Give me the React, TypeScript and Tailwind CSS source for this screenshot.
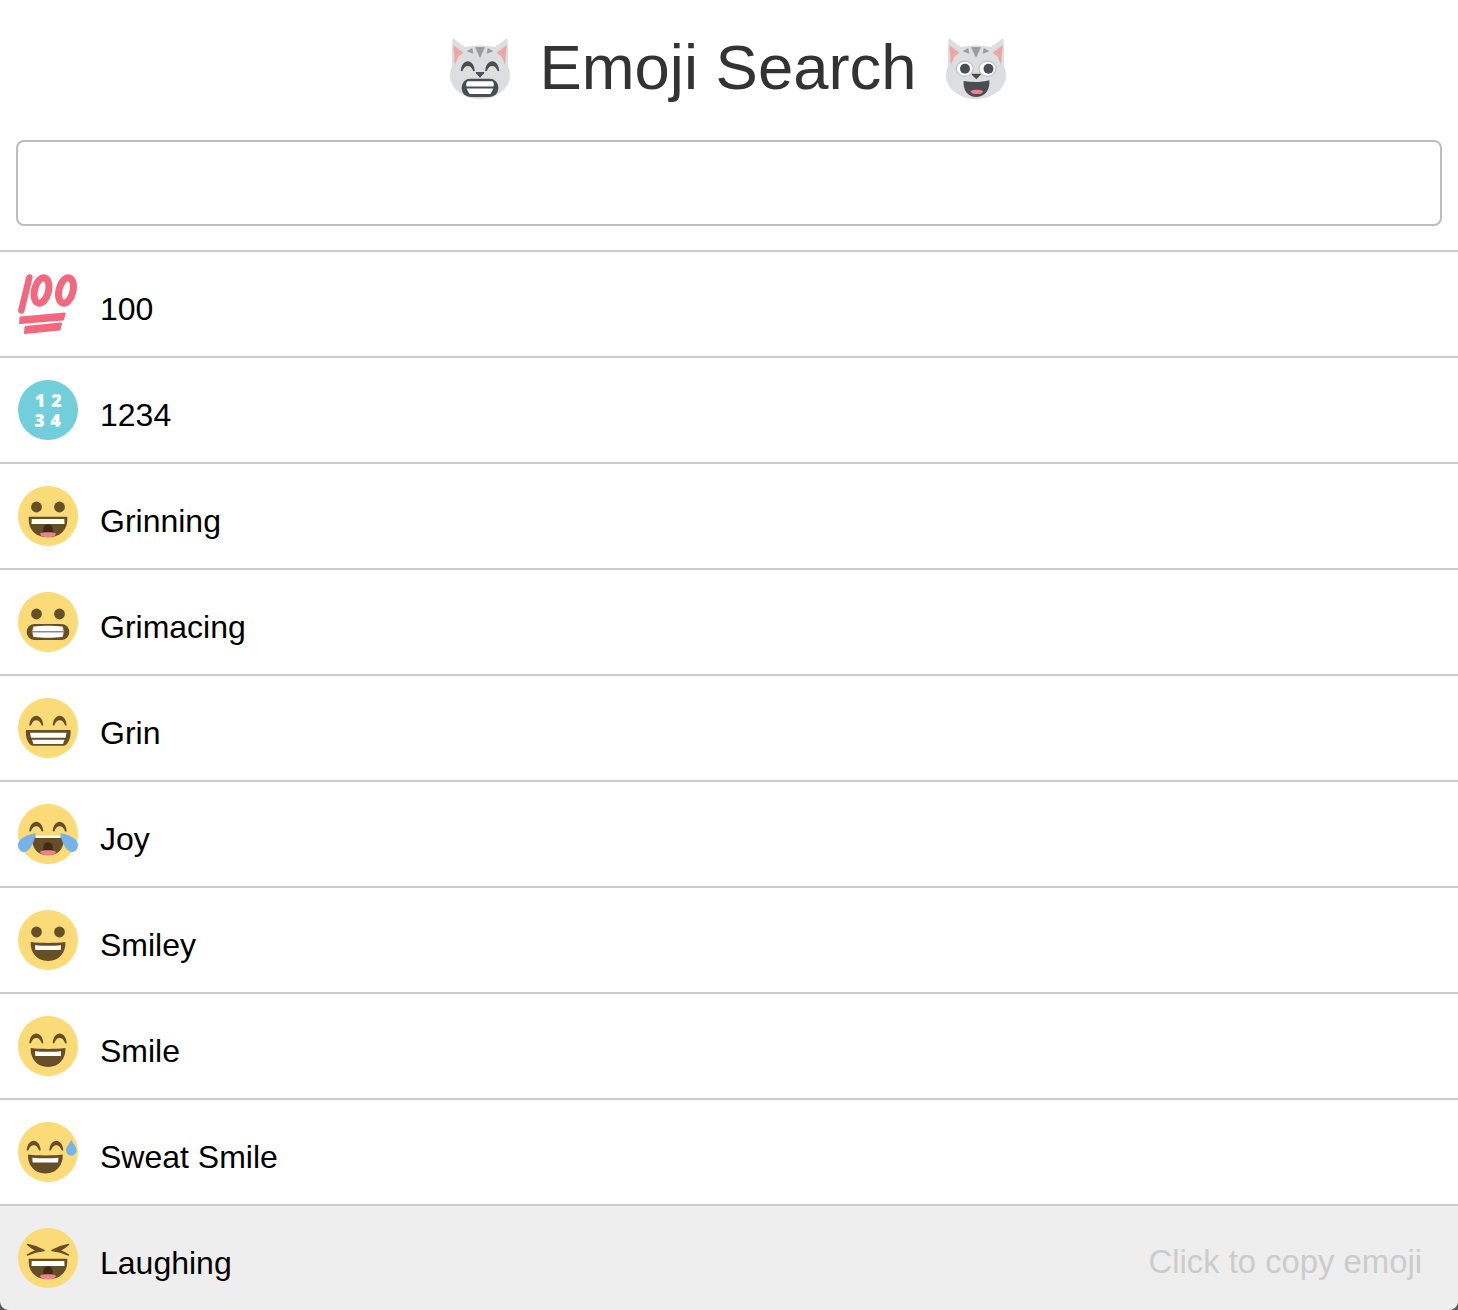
import type { ReactNode } from 'react';

const YELLOW = '#FBDA78';
const BROWN = '#664E27';
const PINK = '#F0808E';
const BLUE = '#75B3EA';
const CAT_DARK = '#4A4D52';

const Face = ({ children }: { children: ReactNode }) => (
    <svg width="60" height="60" viewBox="0 0 60 60" className="shrink-0">
        <circle cx="30" cy="30" r="30" fill={YELLOW} />
        {children}
    </svg>
);

const DotEyes = ({ cy = 21 }: { cy?: number }) => (
    <>
        <circle cx="18.500" cy={cy} r="5.400" fill={BROWN} />
        <circle cx="41.500" cy={cy} r="5.400" fill={BROWN} />
    </>
);

// crescent shaped closed eye, x/y is the top-left of a 14x10 box
const Arc = ({ x, y, color = BROWN }: { x: number; y: number; color?: string }) => (
    <path
        transform={`translate(${x} ${y})`}
        d="M0 9.500C.5 3.500 3.500 0 7 0s6.500 3.500 7 9.500c-.5.500-1.300.500-1.700 0C11 6.500 9.500 4.600 7 4.600S3 6.500 1.700 9.500c-.4.500-1.200.500-1.700 0z"
        fill={color}
    />
);

const ArcEyes = ({ y = 17.500 }: { y?: number }) => (
    <>
        <Arc x={11.300} y={y} />
        <Arc x={34.700} y={y} />
    </>
);

const Throat = () => (
    <>
        <path d="M25.300 47.500V43a4.700 4.700 0 0 1 9.400 0v4.500z" fill="#3E2C12" />
        <path d="M22 47.500c4-1.800 12-1.800 16 0 0 1-1 2.300-2.500 3-3 .8-8 .8-11 0-1.500-.7-2.500-2-2.500-3z" fill={PINK} />
    </>
);

const WideMouth = () => (
    <>
        <path d="M10.700 30.700h38.600v3c0 9-6 17.600-19.300 17.600S10.700 42.700 10.700 33.700z" fill={BROWN} />
        <path d="M13.700 33h32.600l.2 5H13.500z" fill="#fff" />
        <Throat />
    </>
);

const Hundred = () => (
    <svg width="60" height="60" viewBox="0 0 60 60" className="shrink-0">
        <g fill="none" stroke="#F2687F">
            <path d="M11.300 3.500 3.300 36.500" strokeWidth="6.500" strokeLinecap="round" />
            <ellipse cx="23.500" cy="16.500" rx="7" ry="13" transform="rotate(14 23.500 16.500)" strokeWidth="7" />
            <ellipse cx="48" cy="16.500" rx="7" ry="13" transform="rotate(14 48 16.500)" strokeWidth="7" />
        </g>
        <g fill="#F2687F" stroke="#F2687F" strokeWidth="2" strokeLinejoin="round">
            <path d="M2.500 43.500 46.700 39.500 45 45.500 2 49z" />
            <path d="M7.500 53 43 49.500 41.500 55.500 7 59z" />
        </g>
    </svg>
);

const Numbers = () => (
    <svg width="60" height="60" viewBox="0 0 60 60" className="shrink-0">
        <circle cx="30" cy="30" r="30" fill="#72CEDA" />
        <g fill="#fff" fontFamily="'Open Sans', sans-serif" fontWeight="800" fontSize="18" textAnchor="middle">
            <text x="22" y="26.500">1</text>
            <text x="38.500" y="26.500">2</text>
            <text x="21.500" y="47">3</text>
            <text x="37.500" y="47">4</text>
        </g>
    </svg>
);

const Grinning = () => (
    <Face>
        <DotEyes />
        <WideMouth />
    </Face>
);

const Grimacing = () => (
    <Face>
        <DotEyes cy={22} />
        <rect x="8.700" y="32" width="42.600" height="16" rx="8" fill={BROWN} />
        <path d="M15.500 34.500c9-1 20-1 29 0 1.500 3 1.500 7 0 10.500-9 1-20 1-29 0-1.500-3.500-1.500-7.500 0-10.500z" fill="#fff" />
        <path d="M13.500 39.800h33" stroke="#9A8A6C" strokeWidth="1.400" />
    </Face>
);

const Grin = () => (
    <Face>
        <ArcEyes y={17.700} />
        <path d="M8 32h44.500c.5 4.500-.5 10-3 13-1 1.800-2.500 2.700-4 2.700H15c-1.500 0-3-.9-4-2.700-2.500-3-3.500-8.500-3-13z" fill={BROWN} />
        <path d="M12 34.700h36.500l-1 5H13z" fill="#fff" />
        <path d="M14 41.800h32.500l-1.500 4.200H15.500z" fill="#fff" />
    </Face>
);

const Joy = () => (
    <Face>
        <ArcEyes y={17.700} />
        <path d="M14 33.700h32c0 9-4 17.600-16 17.600s-16-8.600-16-17.600z" fill={BROWN} />
        <path d="M18 31.700h24v2.200H18z" fill="#fff" />
        <Throat />
        <path d="M18 29.300 17 33c-2 8-6 15-11.500 15C2 48 0 44 0 40.500 0 36 8 30 18 29.300z" fill={BLUE} />
        <path d="M42 29.300 43 33c2 8 6 15 11.500 15 3.500 0 5.500-4 5.500-7.500C60 36 52 30 42 29.300z" fill={BLUE} />
    </Face>
);

const OpenMouth = ({ x = 12.700, y = 32 }: { x?: number; y?: number }) => (
    <g transform={`translate(${x} ${y})`}>
        <path d="M0 0c11 1.200 24 1.200 34.700 0 .6 10-6 19-17.350 19S-.6 10 0 0z" fill={BROWN} />
        <path d="M4.300 3.200c8 .8 18 .8 26.100 0l-.3 4.800H4.600z" fill="#fff" />
    </g>
);

const Smiley = () => (
    <Face>
        <DotEyes cy={22} />
        <OpenMouth />
    </Face>
);

const Smile = () => (
    <Face>
        <ArcEyes />
        <OpenMouth />
    </Face>
);

const SweatSmile = () => (
    <Face>
        <Arc x={8.700} y={18.700} />
        <Arc x={31.300} y={18.700} />
        <OpenMouth x={10} y={32.500} />
        <path d="M53.300 18c2.500 4.500 5.400 7.500 5.400 10.300a5.350 5.350 0 0 1-10.700 0c0-2.800 2.900-5.800 5.300-10.300z" fill={BLUE} />
    </Face>
);

const Laughing = () => (
    <Face>
        <path d="M9.500 16.500c5.500 1 11.500 3 16.500 6-5 .5-11 2-16.500 4.500 2.500-2 5-3.200 9-4.300-3-1.700-6-3.300-9-6.200z" fill={BROWN} stroke={BROWN} strokeWidth="1.500" strokeLinejoin="round" />
        <path d="M50.500 16.500c-5.500 1-11.500 3-16.500 6 5 .5 11 2 16.500 4.500-2.500-2-5-3.200-9-4.300 3-1.700 6-3.300 9-6.200z" fill={BROWN} stroke={BROWN} strokeWidth="1.500" strokeLinejoin="round" />
        <WideMouth />
    </Face>
);

const CatBase = ({ children }: { children: ReactNode }) => (
    <svg width="60" height="62" viewBox="0 0 60 62" className="mt-[2px] shrink-0">
        <path d="M2.700 0 15 9c9-2 21-2 30 0L57.300 0c1 9 1 20 .7 28 1.300 3 2 6 2 9.500C60 51 46 61 30 61S0 51 0 37.500C0 34 .7 31 2 28 1.700 20 1.700 9 2.700 0z" fill="#DCDEE0" />
        <path d="M3.300 7 13.300 14.700 8 19 5 27zM56.700 7 46.700 14.700 52 19 55 27z" fill="#F0A5A5" />
        <path d="M25 9h10l-5 11zM16.700 13.300 22.300 10l1 5.700zM43.300 13.300 37.700 10l-1 5.700z" fill="#9A9C9F" />
        {children}
    </svg>
);

const CatGrin = () => (
    <CatBase>
        <Arc x={10.800} y={23.300} color={CAT_DARK} />
        <Arc x={35.200} y={23.300} color={CAT_DARK} />
        <path d="M26.500 34h7c.8 0 1 .7.5 1.300L30 39.700l-4-4.400c-.5-.6-.3-1.300.5-1.300z" fill={CAT_DARK} />
        <rect x="11.700" y="40.700" width="36.600" height="18.300" rx="8.500" fill={CAT_DARK} />
        <path d="M17.500 43.300h25c1.500 1.500 1.500 3.500 1 5.200h-27c-.5-1.700-.5-3.700 1-5.200z" fill="#fff" />
        <path d="M16.800 50.500h26.400c-.5 2-1.500 3.700-3 5.500H19.800c-1.500-1.800-2.500-3.500-3-5.500z" fill="#fff" />
    </CatBase>
);

const CatSmile = () => (
    <CatBase>
        <ellipse cx="18.800" cy="30.700" rx="8.500" ry="7.600" fill="#fff" stroke="#BFC1C4" strokeWidth="1.200" />
        <ellipse cx="41.500" cy="30.700" rx="8.500" ry="7.600" fill="#fff" stroke="#BFC1C4" strokeWidth="1.200" />
        <circle cx="19" cy="30.700" r="5" fill={CAT_DARK} />
        <circle cx="42.500" cy="30.700" r="5" fill={CAT_DARK} />
        <path d="M26.500 35.700h7.500c.8 0 1 .7.5 1.300l-4.200 4.300-4.300-4.300c-.5-.6-.3-1.300.5-1.300z" fill={CAT_DARK} />
        <path d="M17.700 43c8 1.500 17.600 1.500 25.600-.7 1 9-4 16.700-12.800 16.700S16.700 52 17.700 43z" fill={CAT_DARK} />
        <path d="M24.300 53c4-1.600 9-1.600 13 0-.5 1-1.500 2.300-2.500 2.700-2.500.5-5.500.5-8 0-1-.4-2-1.700-2.500-2.700z" fill={PINK} />
    </CatBase>
);

const EMOJIS = [
    { title: '100', icon: <Hundred /> },
    { title: '1234', icon: <Numbers /> },
    { title: 'Grinning', icon: <Grinning /> },
    { title: 'Grimacing', icon: <Grimacing /> },
    { title: 'Grin', icon: <Grin /> },
    { title: 'Joy', icon: <Joy /> },
    { title: 'Smiley', icon: <Smiley /> },
    { title: 'Smile', icon: <Smile /> },
    { title: 'Sweat Smile', icon: <SweatSmile /> },
    { title: 'Laughing', icon: <Laughing /> },
];

export default function App() {
    return (
        <div className="relative h-[1310px] overflow-hidden bg-white font-['Liberation_Sans',sans-serif]">
            <header className="flex h-[140px] items-center justify-center gap-[30px] pb-[4px] pr-[2px] text-[63.4px] text-[#333333]">
                <CatGrin />
                <h1>Emoji Search</h1>
                <CatSmile />
            </header>

            <div className="mx-4 mb-6">
                <input className="block h-[86px] w-full rounded-lg border-2 border-[#BDBDBD] bg-white" />
            </div>

            <div className="border-t-2 border-[#CCCCCC]">
                {EMOJIS.map((e, i) => (
                    <div
                        key={e.title}
                        className={
                            i === EMOJIS.length - 1
                                ? 'flex h-[106px] items-start border-b-2 border-[#CCCCCC] bg-[#EEEEEE] pl-[18px] pr-9 pt-[22px] text-[32px] text-black'
                                : 'flex h-[106px] items-start border-b-2 border-[#CCCCCC] pl-[18px] pr-9 pt-[22px] text-[32px] text-black'
                        }
                    >
                        {e.icon}
                        <span className="ml-[22px] mt-[17px] leading-[37px]">{e.title}</span>
                        {i === EMOJIS.length - 1 && (
                            <span className="ml-auto mt-[15px] text-[32.8px] leading-[37px] text-[#CCCCCC]">Click to copy emoji</span>
                        )}
                    </div>
                ))}
            </div>

            {/* window corners */}
            <svg width="9" height="9" viewBox="0 0 9 9" className="absolute bottom-0 left-0">
                <path d="M0 0c0 5 4 9 9 9H0z" fill="#5A5A5A" />
            </svg>
            <svg width="9" height="9" viewBox="0 0 9 9" className="absolute bottom-0 right-0">
                <path d="M9 0c0 5-4 9-9 9h9z" fill="#5A5A5A" />
            </svg>
        </div>
    );
}
